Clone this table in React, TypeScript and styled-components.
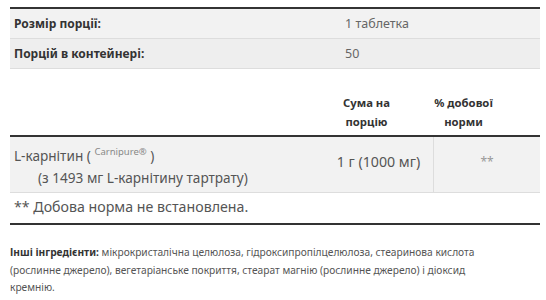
import React from "react";
import styled, { createGlobalStyle } from "styled-components";

const servings = [
  { label: "Розмір порції:", value: "1 таблетка" },
  { label: "Порцій в контейнері:", value: "50" },
];

const App: React.FC = () => {
  return (
    <>
      <GlobalStyle />
      <Page>
        {/* порція */}
        <ServingTable>
          {servings.map((row, index) => (
            <ServingRow key={index} shade={index % 2 === 1}>
              <ServingLabel>{row.label}</ServingLabel>
              <ServingValue>{row.value}</ServingValue>
            </ServingRow>
          ))}
        </ServingTable>

        {/* заголовок таблиці */}
        <FactsHeader>
          <span />
          <HeaderCell>Сума на порцію</HeaderCell>
          <HeaderCell>% добової норми</HeaderCell>
        </FactsHeader>

        <FactsRow>
          <NameCell>
            <div>
              L-карнітин ( <Brand>Carnipure®</Brand> )
            </div>
            <SubName>(з 1493 мг L-карнітину тартрату)</SubName>
          </NameCell>
          <AmountCell>1 г (1000 мг)</AmountCell>
          <DvCell>**</DvCell>
        </FactsRow>

        <Footnote>** Добова норма не встановлена.</Footnote>

        <Ingredients>
          <strong>Інші інгредієнти:</strong> мікрокристалічна целюлоза,
          гідроксипропілцелюлоза, стеаринова кислота (рослинне джерело),
          вегетаріанське покриття, стеарат магнію (рослинне джерело) і діоксид
          кремнію.
        </Ingredients>
      </Page>
    </>
  );
};

export default App;

const GlobalStyle = createGlobalStyle`
  body {
    margin: 0;
    background: #ffffff;
    font-family: "Noto Sans", "Open Sans", sans-serif;
    color: #333333;
  }
`;

const Page = styled.div`
  padding: 7px 6px 0 10px;
`;

// -------------------------------------------------------------
// розмір порції
const ServingTable = styled.div`
  border-top: 2px solid #333333;
`;

const ServingRow = styled.div<{ shade: boolean }>`
  display: grid;
  grid-template-columns: 335px 1fr;
  align-items: center;
  height: 29px;
  border-bottom: 1px solid #dddddd;
  background-color: ${(props) => (props.shade ? "#eeeeee" : "#f2f2f2")};
`;

const ServingLabel = styled.span`
  padding-left: 4px;
  font-size: 12px;
  font-weight: 700;
  color: #333333;
`;

const ServingValue = styled.span`
  font-size: 12.5px;
  color: #666666;
`;

// -------------------------------------------------------------
// таблиця складу
const FactsHeader = styled.div`
  display: grid;
  grid-template-columns: 1fr 97px 97px;
  padding: 24px 28px 4px 0;
  border-bottom: 2px solid #333333;
`;

const HeaderCell = styled.span`
  font-size: 11.3px;
  font-weight: 700;
  line-height: 19px;
  text-align: center;
  color: #333333;
  padding: 0 16px;
`;

const FactsRow = styled.div`
  display: grid;
  grid-template-columns: 1fr 103px 107px;
  background-color: #f2f2f2;
  border-bottom: 1px solid #dddddd;
  height: 55px;
`;

const NameCell = styled.div`
  padding: 4px 0 0 4px;
  font-size: 13.6px;
  line-height: 22px;
  color: #555555;
`;

const Brand = styled.sup`
  font-size: 9.5px;
  color: #888888;
`;

const SubName = styled.div`
  padding-left: 24px;
`;

const AmountCell = styled.div`
  display: flex;
  align-items: center;
  justify-content: center;
  padding: 0 6px 6px 0;
  font-size: 14.2px;
  white-space: nowrap;
  color: #555555;
`;

const DvCell = styled.div`
  display: flex;
  align-items: center;
  justify-content: center;
  padding-bottom: 6px;
  border-left: 1px solid #dddddd;
  font-size: 12px;
  color: #999999;
`;

const Footnote = styled.div`
  padding: 5px 4px 0;
  height: 25px;
  font-size: 14.2px;
  line-height: 17px;
  color: #555555;
  border-bottom: 2px solid #333333;
`;

// -------------------------------------------------------------
// інші інгредієнти
const Ingredients = styled.p`
  margin: 19px 0 0;
  padding-right: 40px;
  font-size: 10.2px;
  line-height: 17.5px;
  color: #555555;

  strong {
    color: #333333;
    font-weight: 700;
  }
`;
